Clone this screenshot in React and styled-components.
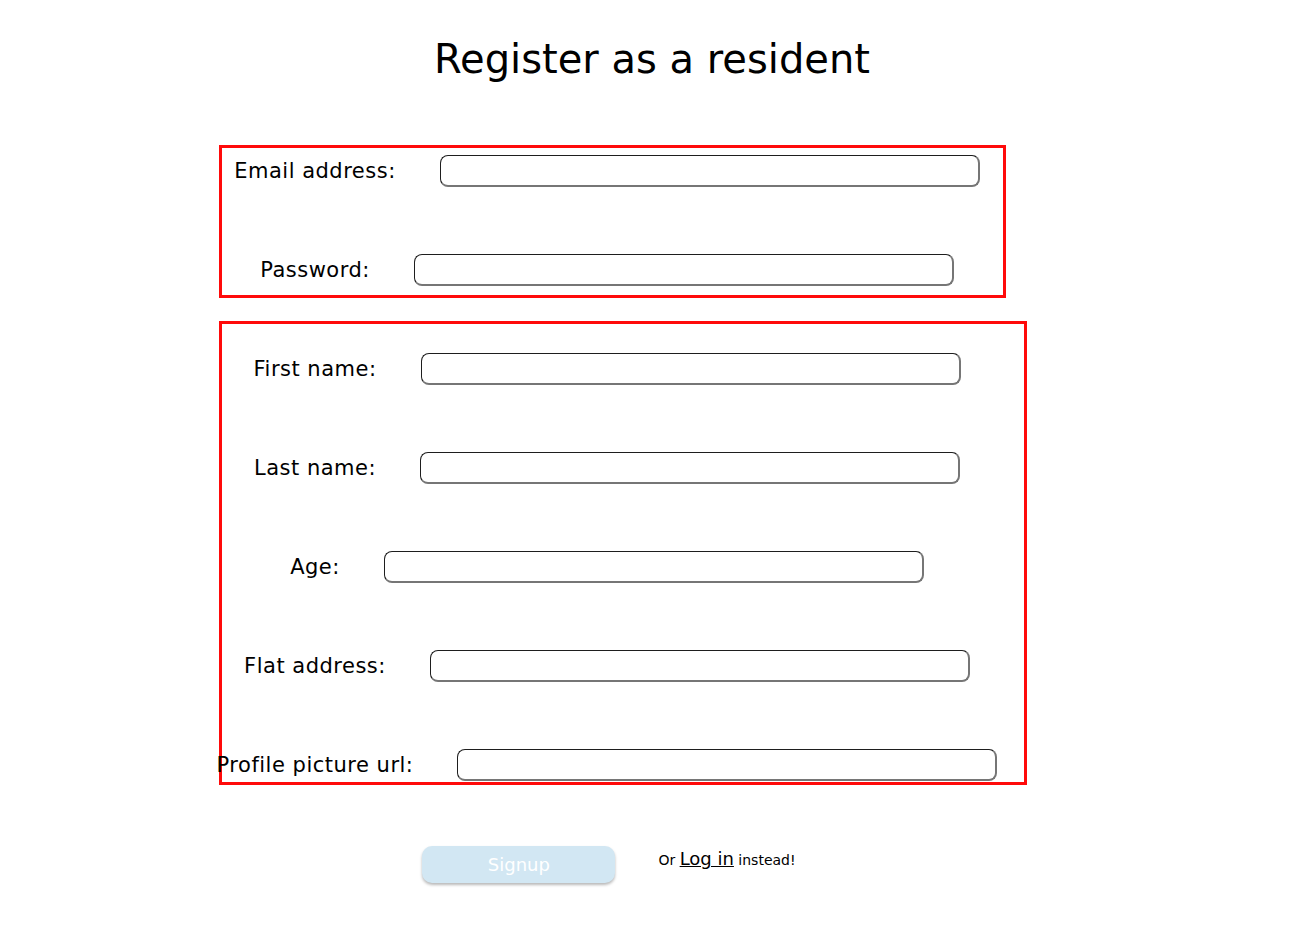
import React from 'react';
import styled, {createGlobalStyle} from 'styled-components';

const GlobalStyle = createGlobalStyle`
  body {
    margin: 0;
    background: #ffffff;
    color: #000000;
    font-family: "DejaVu Sans", "Noto Sans", sans-serif;
  }
`

const Page = styled.div`
  padding-top: 33px;
  padding-bottom: 40px;
`

const Title = styled.h1`
  margin: 0 0 60px 0;
  text-align: center;
  font-size: 40px;
  font-weight: 400;
  letter-spacing: 0;
  line-height: 52px;
  padding-left: 10px;
`

const Form = styled.form`
  display: flex;
  flex-direction: column;
  align-items: flex-start;
  padding-left: 219px;
`

const Box = styled.div`
  box-sizing: border-box;
  width: ${props => props.width}px;
  border: 3px solid #ff0a0a;
  display: flex;
  flex-direction: column;
  gap: 67px;
  padding: ${props => props.pad};
  margin-top: ${props => props.top || 0}px;
`

const Row = styled.div`
  display: flex;
  justify-content: center;
  align-items: center;
  gap: 44px;
  height: 32px;
  white-space: nowrap;
`

const Label = styled.label`
  font-size: 21px;
  letter-spacing: 0.5px;
  line-height: 24px;
`

const Input = styled.input`
  box-sizing: border-box;
  width: 540px;
  height: 32px;
  flex-shrink: 0;
  border-radius: 8px;
  border-style: solid;
  border-width: 1.5px 2px 2px 1.5px;
  border-color: #1e1e1e #767676 #767676 #1e1e1e;
  background: #ffffff;
  outline: none;
`

const Footer = styled.div`
  width: 780px;
  margin-top: 61px;
  display: flex;
  justify-content: center;
  align-items: center;
  gap: 43px;
`

const SignupButton = styled.button`
  width: 193px;
  height: 37px;
  border: none;
  border-radius: 10px;
  background: #d2e7f3;
  color: #ffffff;
  font-family: inherit;
  font-size: 18px;
  box-shadow: 0 2px 3px rgba(0, 0, 0, 0.28);
`

const LoginNote = styled.p`
  margin: 0 0 12px 0;
  font-size: 14px;
  & a {
    color: #000000;
    font-size: 18px;
    text-decoration: underline;
  }
`

const accountFields = [
    {id: 'email', label: 'Email address:', type: 'email'},
    {id: 'password', label: 'Password:', type: 'password'},
]

const residentFields = [
    {id: 'firstName', label: 'First name:', type: 'text'},
    {id: 'lastName', label: 'Last name:', type: 'text'},
    {id: 'age', label: 'Age:', type: 'number'},
    {id: 'flat', label: 'Flat address:', type: 'text'},
    {id: 'picture', label: 'Profile picture url:', type: 'text'},
]

const Field = (props) => {
    return (<Row>
        <Label htmlFor={props.id}>{props.label}</Label>
        <Input id={props.id} type={props.type}/>
    </Row>);
}

export default function App() {
    return (
        <Page>
            <GlobalStyle/>
            <Title>Register as a resident</Title>
            <Form onSubmit={event => event.preventDefault()}>
                <Box width={787} pad={'7px 11px 9px 0'}>
                    {accountFields.map(field => <Field key={field.id} {...field}/>)}
                </Box>
                <Box width={808} pad={'29px 32px 1px 0'} top={23}>
                    {residentFields.map(field => <Field key={field.id} {...field}/>)}
                </Box>
                <Footer>
                    <SignupButton type="submit">Signup</SignupButton>
                    <LoginNote>Or <a href="#login">Log in</a> instead!</LoginNote>
                </Footer>
            </Form>
        </Page>
    );
}
